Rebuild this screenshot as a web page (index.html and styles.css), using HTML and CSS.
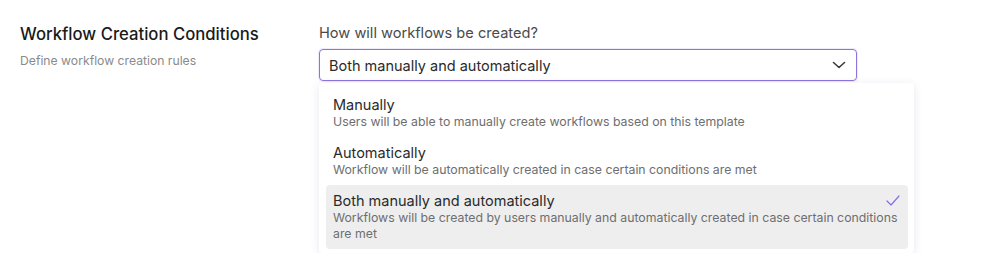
FILE: index.html
```html
<!DOCTYPE html>
<html lang="en">
<head>
  <meta charset="UTF-8">
  <title>Workflow Creation Conditions</title>
  <link rel="stylesheet" href="styles.css">
</head>
<body>
  <div class="section">
    <div class="section-info">
      <h2>Workflow Creation Conditions</h2>
      <p>Define workflow creation rules</p>
    </div>
    <div class="field">
      <label class="field-label">How will workflows be created?</label>
      <div class="select">
        <span>Both manually and automatically</span>
        <svg class="chevron" width="14" height="8" viewBox="0 0 14 8"><path d="M1.5 1.5 L7 6.5 L12.5 1.5" fill="none" stroke="#3a3a3a" stroke-width="1.6" stroke-linecap="round" stroke-linejoin="round"/></svg>
      </div>
      <ul class="menu">
        <li class="option">
          <div class="option-title">Manually</div>
          <div class="option-desc">Users will be able to manually create workflows based on this template</div>
        </li>
        <li class="option">
          <div class="option-title">Automatically</div>
          <div class="option-desc">Workflow will be automatically created in case certain conditions are met</div>
        </li>
        <li class="option selected">
          <div class="option-title">Both manually and automatically</div>
          <div class="option-desc">Workflows will be created by users manually and automatically created in case certain conditions are met</div>
          <svg class="check" width="14" height="11" viewBox="0 0 14 11"><path d="M1 6 L5 10 L13 1" fill="none" stroke="#8a6ee0" stroke-width="1.2" stroke-linecap="round" stroke-linejoin="round"/></svg>
        </li>
      </ul>
    </div>
  </div>
</body>
</html>
```

FILE: styles.css
```css
body {
  font-family: Inter, "Noto Sans", sans-serif;
  margin: 0;
  padding: 0;
  background: #fff;
  color: #1f1f1f;
}
.section {
  display: flex;
  padding: 23px 0 0 20px;
}
.section-info {
  width: 299px;
}
.section-info h2 {
  margin: 0;
  font-size: 16.7px;
  font-weight: 500;
  line-height: 22px;
  color: #1a1a1a;
}
.section-info p {
  margin: 8px 0 0;
  font-size: 12.2px;
  line-height: 16px;
  color: #8a8a8a;
}
.field {
  width: 538px;
}
.field-label {
  display: block;
  font-size: 14.6px;
  line-height: 20px;
  color: #4a4a4a;
  margin-bottom: 6px;
}
.select {
  display: flex;
  align-items: center;
  justify-content: space-between;
  height: 32px;
  box-sizing: border-box;
  padding: 0 10px 0 9px;
  border: 1px solid #8f74de;
  border-radius: 4px;
  box-shadow: 0 0 0 1px rgba(143, 116, 222, 0.15);
  font-size: 14.5px;
  color: #2a2a2a;
}
.menu {
  list-style: none;
  margin: 2px 0 0;
  padding: 6px 6px 4px 7px;
  width: 595px;
  box-sizing: border-box;
  background: #fff;
  border-radius: 4px;
  box-shadow: 0 2px 10px rgba(60, 40, 120, 0.12);
}
.option {
  position: relative;
  padding: 7px 30px 7px 7px;
  border-radius: 4px;
}
.option.selected {
  background: #eeeeee;
  padding-right: 8px;
}
.option-title {
  font-size: 14.5px;
  line-height: 18px;
  color: #2a2a2a;
}
.option-desc {
  font-size: 12.3px;
  line-height: 16px;
  color: #6e6e6e;
}
.check {
  position: absolute;
  top: 10px;
  right: 8px;
}
```
